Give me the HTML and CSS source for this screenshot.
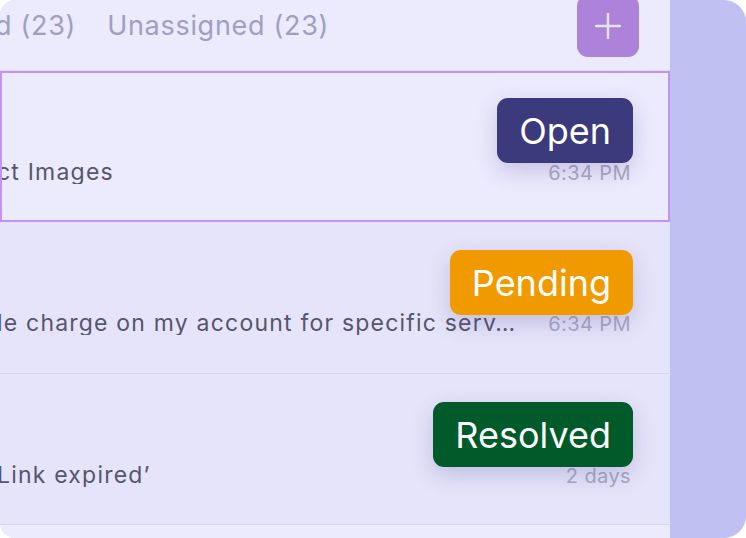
FILE: index.html
```html
<!DOCTYPE html>
<html>
<head>
<meta charset="utf-8">
<link rel="stylesheet" href="styles.css">
</head>
<body>
<div class="frame">
  <div class="panel">
    <div class="header">
      <div class="tabs">
        <span class="tab">d (23)</span>
        <span class="tab">Unassigned (23)</span>
      </div>
      <button class="add" aria-label="Add">
        <svg width="26" height="26" viewBox="0 0 26 26"><path d="M13 1v24M1 13h24" stroke="#e9e3f6" stroke-width="2.4" stroke-linecap="round" fill="none"/></svg>
      </button>
    </div>
    <div class="row selected">
      <span class="msg">ct Images</span>
      <span class="time">6:34 PM</span>
      <span class="badge open">Open</span>
    </div>
    <div class="row">
      <span class="msg">le charge on my account for specific serv…</span>
      <span class="time">6:34 PM</span>
      <span class="badge pending">Pending</span>
    </div>
    <div class="row last">
      <span class="msg">Link expired’</span>
      <span class="time">2 days</span>
      <span class="badge resolved">Resolved</span>
    </div>
    <div class="footer"></div>
  </div>
</div>
</body>
</html>
```
FILE: styles.css
```css
* { box-sizing: border-box; }
html, body { margin: 0; padding: 0; background: #ffffff; }
body { font-family: Inter, "Open Sans", sans-serif; }
.frame {
  width: 746px;
  height: 538px;
  background: #c1c0f3;
  border-radius: 16px 22px 22px 16px;
  overflow: hidden;
  display: flex;
}
.panel {
  width: 670px;
  height: 538px;
  background: #eceafd;
  display: flex;
  flex-direction: column;
}
.header {
  height: 71px;
  flex: none;
  border-bottom: 1px solid #dcd9f4;
  display: flex;
  align-items: flex-start;
}
.tabs {
  display: flex;
  gap: 31px;
  margin-left: -5px;
  padding-top: 12px;
}
.tab {
  font-size: 27px;
  line-height: 27px;
  letter-spacing: 0.7px;
  color: #a19fc1;
}
.add {
  margin-left: auto;
  margin-right: 31px;
  margin-top: -5px;
  width: 62px;
  height: 62px;
  border: none;
  border-radius: 11px;
  background: #ad82da;
  display: flex;
  align-items: center;
  justify-content: center;
  padding: 0;
}
.row {
  position: relative;
  flex: none;
  height: 151px;
  display: flex;
  align-items: baseline;
  padding: 90px 39px 0 0;
  background: #e6e4fa;
}
.row.selected {
  background: #eceafd;
  outline: 2px solid #c394f5;
  outline-offset: -2px;
}
.row + .row { height: 152px; border-bottom: 1px solid #d8d5f0; }
.row.last { height: 151px; }
.msg {
  flex: 1;
  margin-left: -3px;
  font-size: 23px;
  line-height: 23px;
  letter-spacing: 1.2px;
  color: #57556c;
  white-space: nowrap;
  overflow: hidden;
}
.time {
  font-size: 20px;
  line-height: 20px;
  letter-spacing: 0.4px;
  color: #aaa8c4;
}
.badge {
  position: absolute;
  top: 27px;
  right: 37px;
  height: 65px;
  padding: 0 22px;
  border-radius: 11px;
  display: flex;
  align-items: center;
  font-size: 36px;
  color: #ffffff;
  box-shadow: 0 8px 22px rgba(70, 60, 130, 0.22);
}
.row + .row .badge { top: 28px; }
.open { background: #3b3a7c; }
.pending { background: #f09a00; }
.resolved { background: #005a29; }
.footer { flex: 1; background: #eceafd; }
```
